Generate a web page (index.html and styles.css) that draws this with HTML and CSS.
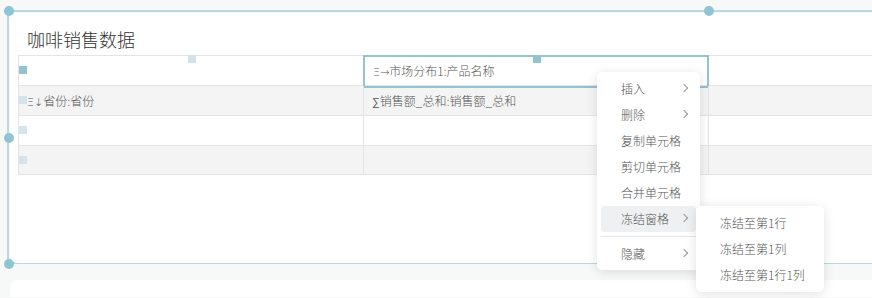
FILE: index.html
```html
<!DOCTYPE html>
<html lang="zh">
<head>
    <meta charset="UTF-8">
    <meta name="viewport" content="width=device-width, initial-scale=1.0">
    <title>咖啡销售数据</title>
    <link rel="stylesheet" href="styles.css">
</head>
<body>
<div class="widget">
    <div class="card">
        <p class="card-title">咖啡销售数据</p>
        <div class="table">
            <div class="row">
                <div class="cell"></div>
                <div class="cell selected"><span class="sym">Ξ→</span>市场分布1:产品名称</div>
                <div class="cell"></div>
            </div>
            <div class="row alt">
                <div class="cell"><span class="sym">Ξ↓</span>省份:省份</div>
                <div class="cell"><span class="sym">∑</span>销售额_总和:销售额_总和</div>
                <div class="cell"></div>
            </div>
            <div class="row">
                <div class="cell"></div>
                <div class="cell"></div>
                <div class="cell"></div>
            </div>
            <div class="row alt">
                <div class="cell"></div>
                <div class="cell"></div>
                <div class="cell"></div>
            </div>
        </div>
    </div>

    <!-- 列/行 拖拽点 -->
    <span class="mark dark" style="left:10px;top:54px"></span>
    <span class="mark light" style="left:179px;top:43px"></span>
    <span class="mark dark" style="left:524px;top:43px"></span>
    <span class="mark light" style="left:10px;top:84px"></span>
    <span class="mark light" style="left:10px;top:114px"></span>
    <span class="mark light" style="left:10px;top:144px"></span>

    <!-- 选中框手柄 -->
    <span class="handle" style="left:-5px;top:-6px"></span>
    <span class="handle" style="left:695px;top:-6px"></span>
    <span class="handle" style="left:-5px;top:121px"></span>
    <span class="handle" style="left:-5px;top:247px"></span>
</div>

<div class="card next"></div>

<!-- 右键菜单 -->
<div class="menu">
    <div class="item">插入<span class="arrow"></span></div>
    <div class="item">删除<span class="arrow"></span></div>
    <div class="item">复制单元格</div>
    <div class="item">剪切单元格</div>
    <div class="item">合并单元格</div>
    <div class="item active">冻结窗格<span class="arrow"></span></div>
    <div class="divider"></div>
    <div class="item">隐藏<span class="arrow"></span></div>
</div>
<div class="menu sub">
    <div class="item">冻结至第1行</div>
    <div class="item">冻结至第1列</div>
    <div class="item">冻结至第1行1列</div>
</div>
</body>
</html>
```

FILE: styles.css
```css
body{
    margin: 0;
    background-color: #f7f8f8;
    font-family: "Noto Sans CJK SC", "Noto Sans", sans-serif;
    font-weight: 300;
    color: #555;
    overflow: hidden;
    height: 298px;
}
.widget{
    position: relative;
    margin: 10px 0 0 7px;
    height: 250px;
    border: solid #b9d8e0;
    border-width: 2px 0 2px 2px;
}
.card{
    background-color: white;
    border-radius: 8px 0 0 8px;
    height: 100%;
    margin: 1px 0 0 1px;
    box-sizing: border-box;
    padding: 14px 0 0 8px;
}
.card.next{
    height: 17px;
    margin: 16px 0 0 10px;
    padding: 0;
    border-radius: 8px 0 0 0;
}
.card-title{
    margin: 0 0 4px 9px;
    font-size: 18px;
    line-height: 24px;
    color: #333;
}
.table{
    border-top: 1px solid #e4e4e4;
    border-left: 1px solid #e4e4e4;
}
.row{
    display: grid;
    grid-template-columns: 345px 345px 1fr;
    height: 30px;
    border-bottom: 1px solid #e4e4e4;
    box-sizing: border-box;
}
.row:last-child{
    height: 29px;
}
.row.alt{
    background-color: #f4f4f4;
}
.cell{
    border-right: 1px solid #e4e4e4;
    font-size: 12px;
    line-height: 29px;
    padding-left: 8px;
    white-space: nowrap;
}
.cell:last-child{
    border-right: none;
}
.sym{
    font-family: "DejaVu Sans", sans-serif;
    font-size: 11px;
}
.cell.selected{
    border: 2px solid #92c3d1;
    margin: -1px 0 -1px -1px;
    line-height: 27px;
}
.mark{
    position: absolute;
    width: 8px;
    height: 8px;
}
.mark.dark{
    background-color: #92c3d1;
}
.mark.light{
    background-color: #d2e5eb;
}
.handle{
    position: absolute;
    width: 10px;
    height: 10px;
    border-radius: 100%;
    background-color: #8fc4d4;
}
.menu{
    position: absolute;
    left: 597px;
    top: 72px;
    width: 103px;
    padding: 4px 0 3px;
    background-color: white;
    border-radius: 5px;
    box-shadow: 0 2px 12px rgba(0,0,0,0.12);
    box-sizing: border-box;
    font-size: 12px;
    color: #555;
}
.menu.sub{
    left: 696px;
    top: 206px;
    width: 128px;
    padding: 4px 0;
}
.menu.sub .item{
    padding-left: 24px;
    margin: 0;
}
.item{
    position: relative;
    height: 26px;
    line-height: 26px;
    margin: 0 4px;
    padding-left: 20px;
    border-radius: 4px;
}
.item.active{
    background-color: #eff0f2;
}
.arrow{
    position: absolute;
    right: 9px;
    top: 9px;
    width: 5px;
    height: 5px;
    border-top: 1px solid #999;
    border-right: 1px solid #999;
    transform: rotate(45deg);
}
.divider{
    height: 1px;
    background-color: #e6e6e6;
    margin: 4px 4px 4px;
}
```
